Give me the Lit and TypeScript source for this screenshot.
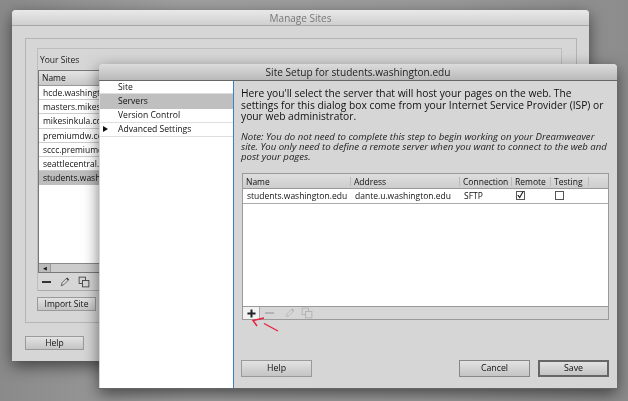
import { LitElement, html, css, svg } from "lit";
import { customElement } from "lit/decorators.js";

const pencil = svg`<path d="M3 13l1-4 6-6 2.5 2.5-6 6z" fill="none" stroke="currentColor" stroke-width="1"/><path d="M9.5 3.5L11 2l2.5 2.5L12 6z" fill="currentColor"/>`;
const copy = svg`<rect x="1.5" y="1.5" width="8.5" height="8.5" fill="none" stroke="currentColor" stroke-width="1.2"/><rect x="6" y="6" width="8.5" height="8.5" fill="#d6d6d6" stroke="currentColor" stroke-width="1.2"/>`;
const ico = (c: unknown) => html`<svg class="ico" viewBox="0 0 16 16" width="12" height="12">${c}</svg>`;

@customElement("app-root")
export class AppRoot extends LitElement {
  static styles = css`
    :host {
      display: block;
      position: relative;
      width: 628px;
      height: 401px;
      overflow: hidden;
      background: linear-gradient(90deg, #8a8a8a, #a0a0a0 30%, #9a9a9a 70%, #8c8c8c);
      font-family: "Open Sans", sans-serif;
      font-size: 8.5px;
      color: #111;
    }
    .blur { position: absolute; inset: 0; filter: blur(0.3px); }
    .win {
      position: absolute;
      display: flex;
      flex-direction: column;
      background: #d6d6d6;
      border-radius: 4px 4px 0 0;
      box-shadow: 0 5px 16px rgba(0, 0, 0, 0.55);
    }
    .back { left: 12px; top: 10px; width: 577px; height: 351px; }
    .front { left: 99px; top: 64px; width: 518px; height: 325px; border-bottom: 1px solid #666; box-sizing: border-box; }
    .title {
      text-align: center;
      background: linear-gradient(#e9e9e9, #cfcfcf);
      border-bottom: 1px solid #a8a8a8;
      border-radius: 4px 4px 0 0;
      flex: none;
    }
    .back > .title { height: 15px; line-height: 16px; color: #777; font-size: 10px; }
    .front > .title { height: 16px; line-height: 17px; color: #222; font-size: 10.1px; background: linear-gradient(#dcdcdc, #b9b9b9); border-bottom-color: #666; }
    .backbody { flex: 1; display: flex; flex-direction: column; padding: 12px 12px 11px 13px; }
    .outer { flex: 1; border: 1px solid #b4b4b4; padding: 9px 14px 0 11px; display: flex; flex-direction: column; }
    .inner { border: 1px solid #bdbdbd; border-bottom: 0; flex: 1; display: flex; flex-direction: column; }
    .yours { height: 21px; line-height: 22px; padding-left: 2px; color: #222; }
    .list { flex: 1; background: #fff; border: 1px solid #777; border-right: 0; display: flex; flex-direction: column; }
    .lhead { height: 14px; line-height: 14px; padding-left: 3px; background: linear-gradient(#e4e4e4, #c8c8c8); border-bottom: 1px solid #999; }
    .lrow { height: 14.2px; line-height: 13px; padding-left: 4px; border-bottom: 1px solid #ccc; box-sizing: border-box; white-space: nowrap; }
    .lrow.sel { background: #bdbdbd; border-bottom: 0; }
    .scroll { margin-top: auto; height: 8px; background: #ccc; border-top: 1px solid #888; display: flex; }
    .scroll i { width: 11px; background: #bbb; border-right: 1px solid #999; display: flex; align-items: center; justify-content: center; font-style: normal; font-size: 5px; color: #111; }
    .tools { height: 17px; display: flex; align-items: center; gap: 7px; padding-left: 4px; border-bottom: 1px solid #aaa; color: #444; }
    .minus { width: 9px; height: 2px; background: #333; margin-right: 1px; }
    .ico { flex: none; display: block; }
    .btn {
      box-sizing: border-box;
      text-align: center;
      border: 1px solid #9a9a9a;
      background: linear-gradient(#e2e2e2, #c4c4c4);
      color: #111;
    }
    .import { width: 59px; height: 14px; line-height: 12px; margin: 6px 0 11px; }
    .bhelp { width: 59px; height: 14px; line-height: 12px; margin-top: 13px; }
    .split { flex: 1; display: flex; min-height: 0; }
    .side { width: 133px; margin-left: 1px; background: #fff; flex: none; border-right: 1px solid #3f7fc0; font-size: 8.6px; }
    .item { height: 14px; line-height: 13px; padding-left: 18px; border-bottom: 1px solid #ddd; box-sizing: border-box; position: relative; }
    .item:first-child { height: 13px; }
    .item.sel { background: #bfbfbf; border-bottom: 0; height: 15px; line-height: 15px; }
    .tri { position: absolute; left: 3px; top: 3px; border-left: 5px solid #111; border-top: 3.5px solid transparent; border-bottom: 3.5px solid transparent; }
    .main { flex: 1; display: flex; flex-direction: column; padding: 7px 8px 11px 7px; min-width: 0; }
    .lead { font-size: 10.25px; line-height: 11.7px; color: #111; margin: 0; width: 364px; }
    .note { font-size: 9.6px; line-height: 10px; font-style: italic; color: #222; margin: 9px 0 0; width: 369px; }
    .table { flex: none; height: 147px; margin: 11px 0 0 1px; border: 1px solid #9a9a9a; display: flex; flex-direction: column; background: #fff; box-sizing: border-box; }
    .cols { display: grid; grid-template-columns: 108px 109px 52px 39px 38px 1fr; }
    .thead { height: 14px; line-height: 14px; background: linear-gradient(#dedede, #cdcdcd); border-bottom: 1px solid #999; flex: none; }
    .thead span { padding-left: 3px; border-right: 1px solid #bbb; height: 9px; line-height: 9px; margin-top: 3px; }
    .thead span:last-child { border: 0; }
    .tbody { height: 14px; line-height: 14px; border-bottom: 1px solid #aaa; flex: none; }
    .tbody span { padding-left: 4px; white-space: nowrap; }
    .box { display: block; width: 9px; height: 9px; margin: 2px 0 0 0; background: #fff; border: 1px solid #555; box-sizing: border-box; }
    .box svg { display: block; overflow: visible; }
    .tbar { margin-top: auto; height: 12px; flex: none; background: #d6d6d6; border-top: 1px solid #999; display: flex; align-items: center; color: #b2b2b2; gap: 5px; }
    .plus { width: 16px; height: 12px; background: #f2f2f2; border-right: 1px solid #aaa; display: flex; align-items: center; justify-content: center; }
    .gm { width: 9px; height: 2px; background: #b2b2b2; margin-right: 5px; }
    .bottom { margin-top: auto; display: flex; align-items: center; }
    .bottom .btn { width: 71px; height: 17px; line-height: 15px; font-size: 8.8px; }
    .spacer { flex: 1; }
    .cancel { margin-right: 8px; border-color: #888 !important; }
    .save { border: 2px solid #666 !important; line-height: 13px !important; }
    .arrows { position: absolute; left: 0; top: 0; pointer-events: none; }
  `;

  render() {
    const sites = ["hcde.washington.edu", "masters.mikesinkula.com", "mikesinkula.com", "premiumdw.com", "sccc.premiumdw.com", "seattlecentral.edu"];
    return html`
      <div class="blur">
        <div class="win back">
          <div class="title">Manage Sites</div>
          <div class="backbody">
            <div class="outer">
              <div class="inner">
                <div class="yours">Your Sites</div>
                <div class="list">
                  <div class="lhead">Name</div>
                  ${sites.map((s) => html`<div class="lrow">${s}</div>`)}
                  <div class="lrow sel">students.washington.edu</div>
                  <div class="scroll"><i>◀</i></div>
                </div>
                <div class="tools">
                  <span class="minus"></span>${ico(pencil)}${ico(copy)}
                </div>
              </div>
              <div class="btn import">Import Site</div>
            </div>
            <div class="btn bhelp">Help</div>
          </div>
        </div>
        <div class="win front">
          <div class="title">Site Setup for students.washington.edu</div>
          <div class="split">
            <div class="side">
              <div class="item">Site</div>
              <div class="item sel">Servers</div>
              <div class="item">Version Control</div>
              <div class="item"><span class="tri"></span>Advanced Settings</div>
            </div>
            <div class="main">
              <p class="lead">Here you'll select the server that will host your pages on the web. The settings for this dialog box come from your Internet Service Provider (ISP) or your web administrator.</p>
              <p class="note">Note: You do not need to complete this step to begin working on your Dreamweaver site. You only need to define a remote server when you want to connect to the web and post your pages.</p>
              <div class="table">
                <div class="cols thead"><span>Name</span><span>Address</span><span>Connection</span><span>Remote</span><span>Testing</span><span></span></div>
                <div class="cols tbody">
                  <span>students.washington.edu</span><span>dante.u.washington.edu</span><span>SFTP</span>
                  <span><i class="box"><svg viewBox="0 0 9 9" width="7" height="7"><path d="M1 4l2.5 3L8 -1" fill="none" stroke="#222" stroke-width="1.5"/></svg></i></span>
                  <span><i class="box"></i></span><span></span>
                </div>
                <div class="tbar">
                  <div class="plus"><svg viewBox="0 0 10 10" width="9" height="9"><path d="M5 0.5v9M0.5 5h9" stroke="#222" stroke-width="2.2"/></svg></div>
                  <span class="gm"></span>${ico(pencil)}${ico(copy)}
                </div>
              </div>
              <div class="bottom">
                <div class="btn">Help</div>
                <span class="spacer"></span>
                <div class="btn cancel">Cancel</div>
                <div class="btn save">Save</div>
              </div>
            </div>
          </div>
        </div>
        <svg class="arrows" width="628" height="401" viewBox="0 0 628 401">
          <path d="M264 318L253 320.5L257 326M264 323.5L278 331" fill="none" stroke="#e8203c" stroke-width="1.4"/>
        </svg>
      </div>
    `;
  }
}
